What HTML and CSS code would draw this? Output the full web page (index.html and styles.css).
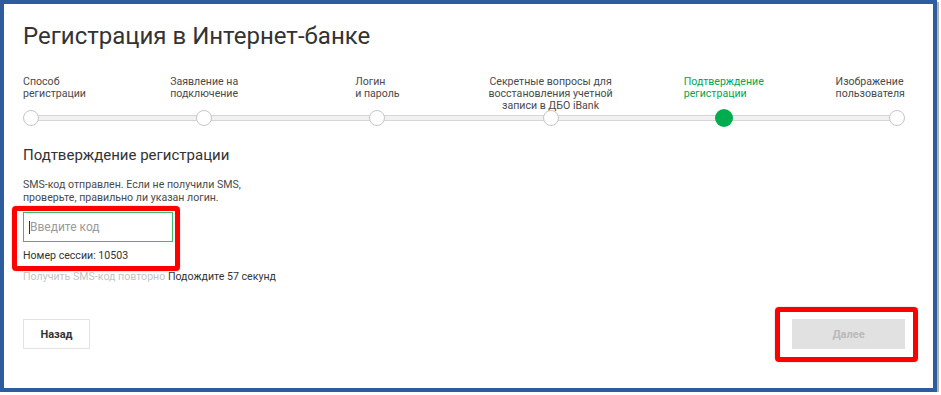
FILE: index.html
```html
<!DOCTYPE html>
<html lang="ru">
<head>
<meta charset="utf-8">
<title>Регистрация в Интернет-банке</title>
<link rel="stylesheet" href="styles.css">
</head>
<body>
<div class="frame">
  <h1 class="title">Регистрация в Интернет-банке</h1>
  <div class="stepper">
    <div class="step step-first">
      <div class="step-label">Способ<br>регистрации</div>
      <div class="dot"></div>
    </div>
    <div class="step">
      <div class="step-label">Заявление на<br>подключение</div>
      <div class="dot"></div>
    </div>
    <div class="step">
      <div class="step-label">Логин<br>и пароль</div>
      <div class="dot"></div>
    </div>
    <div class="step">
      <div class="step-label step-label-center">Секретные вопросы для<br>восстановления учетной<br>записи в ДБО iBank</div>
      <div class="dot"></div>
    </div>
    <div class="step step-active">
      <div class="step-label">Подтверждение<br>регистрации</div>
      <div class="dot"></div>
    </div>
    <div class="step step-last">
      <div class="step-label">Изображение<br>пользователя</div>
      <div class="dot"></div>
    </div>
  </div>

  <h2 class="section-title">Подтверждение регистрации</h2>
  <p class="hint">SMS-код отправлен. Если не получили SMS,<br>проверьте, правильно ли указан логин.</p>
  <input class="code-input" type="text" placeholder="Введите код">
  <div class="session">Номер сессии: 10503</div>
  <div class="resend"><span class="resend-link">Получить SMS-код повторно</span> Подождите 57 секунд</div>

  <div class="actions">
    <button class="btn btn-back" type="button">Назад</button>
    <button class="btn btn-next" type="button" disabled>Далее</button>
  </div>
</div>
<div class="mark mark-input"></div>
<div class="mark mark-next"></div>
</body>
</html>
```

FILE: styles.css
```css
html, body {
  margin: 0;
  padding: 0;
  background: #ffffff;
}

body {
  font-family: Roboto, "Liberation Sans", Arial, sans-serif;
  color: #333333;
}

.frame {
  box-sizing: border-box;
  width: 937px;
  height: 392px;
  border: 4px solid #2d5d9e;
  box-shadow: 2px 2px 0 #b4b4b4;
  padding: 18px 28px 0 19px;
  display: flex;
  flex-direction: column;
  align-items: stretch;
}

.title {
  margin: 0;
  font-size: 24px;
  line-height: 28px;
  font-weight: 400;
  color: #333333;
}

.stepper {
  margin-top: 26px;
  display: flex;
  justify-content: space-between;
  background: linear-gradient(to bottom, #d6d6d6 0 1px, #f1f1f1 1px 5px, #d6d6d6 5px 6px) 8px 39px / calc(100% - 16px) 6px no-repeat;
}

.step {
  width: 16px;
  display: flex;
  flex-direction: column;
  align-items: center;
}

.step-first {
  align-items: flex-start;
}

.step-last {
  align-items: flex-end;
}

.step-label {
  height: 34px;
  white-space: nowrap;
  font-size: 10.6px;
  line-height: 12px;
  color: #4a4a4a;
  text-align: left;
}

.step-label-center {
  text-align: center;
}

.dot {
  box-sizing: border-box;
  width: 16px;
  height: 16px;
  border: 1px solid #c6c6c6;
  border-radius: 50%;
  background: #ffffff;
}

.step-active .step-label {
  color: #00a651;
}

.step-active .dot {
  width: 18px;
  height: 18px;
  margin-top: -1px;
  margin-bottom: -1px;
  border: none;
  background: #00ad4e;
}

.section-title {
  margin: 20px 0 0;
  font-size: 15px;
  line-height: 18px;
  font-weight: 400;
  color: #333333;
}

.hint {
  margin: 14px 0 0;
  font-size: 10.6px;
  line-height: 13px;
  color: #4a4a4a;
}

.code-input {
  box-sizing: border-box;
  margin-top: 8px;
  width: 150px;
  height: 30px;
  border: 1px solid #3fb96c;
  border-radius: 0;
  padding: 0 6px;
  font-family: Roboto, "Liberation Sans", Arial, sans-serif;
  font-size: 12px;
  color: #333333;
  outline: none;
  align-self: flex-start;
  background: #ffffff linear-gradient(#333333, #333333) 5px 50% / 1px 13px no-repeat;
}

.code-input::placeholder {
  color: #9a9a9a;
}

.session {
  margin-top: 7px;
  font-size: 10.6px;
  line-height: 13px;
  color: #333333;
}

.resend {
  margin-top: 8px;
  font-size: 10.6px;
  line-height: 13px;
  color: #333333;
}

.resend-link {
  color: #c4c4c4;
}

.actions {
  margin-top: 36px;
  display: flex;
  justify-content: space-between;
}

.btn {
  box-sizing: border-box;
  height: 30px;
  font-family: Roboto, "Liberation Sans", Arial, sans-serif;
  font-size: 11px;
  font-weight: 700;
  border-radius: 0;
  padding: 0;
  cursor: pointer;
}

.btn-back {
  width: 67px;
  background: #ffffff;
  border: 1px solid #e4e4e4;
  color: #333333;
}

.btn-next {
  width: 113px;
  background: #e1e1e1;
  border: 1px solid #e1e1e1;
  color: #b9b9b9;
}

.mark {
  position: absolute;
  box-sizing: border-box;
  border: 5px solid #ff0000;
  border-radius: 4px;
  box-shadow: 0 0 2px rgba(0, 0, 0, 0.25);
}

.mark-input {
  left: 12px;
  top: 206px;
  width: 168px;
  height: 65px;
}

.mark-next {
  left: 775px;
  top: 307px;
  width: 143px;
  height: 55px;
}
```
